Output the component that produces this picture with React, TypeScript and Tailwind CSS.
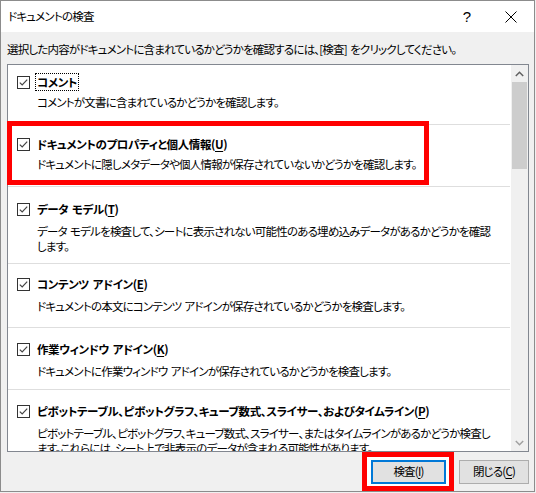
import type { ReactNode } from 'react'

// Office "ドキュメントの検査" dialog, Windows 10 look.

function CheckBox() {
  return (
    <svg width="13" height="13" viewBox="0 0 13 13" className="shrink-0" aria-hidden>
      <rect x="0.5" y="0.5" width="12" height="12" fill="#fff" stroke="#333" />
      <path d="M2.8 6.6 L5.2 9 L10.2 3.6" fill="none" stroke="#444" strokeWidth="1.2" />
    </svg>
  )
}

function Key({ k }: { k: string }) {
  return (
    <>
      (<span className="underline underline-offset-2">{k}</span>)
    </>
  )
}

interface ItemProps {
  title: ReactNode
  desc: ReactNode
  pt: string
  gap: string
  pb: string
  focus?: boolean
  last?: boolean
}

function Item({ title, desc, pt, gap, pb, focus, last }: ItemProps) {
  return (
    <div className={`${pt} ${pb} ${last ? '' : 'border-b border-[#dedede]'} mr-[1px]`}>
      <div className="flex h-[16px] items-center gap-[5px] pl-[9px]">
        <CheckBox />
        <span
          className={`border px-[1px] leading-[16px] font-bold tracking-[-0.4px] whitespace-pre ${
            focus ? 'border-dotted border-black' : 'border-transparent'
          }`}
        >
          {title}
        </span>
      </div>
      <div className={`${gap} pl-[29px] whitespace-pre`}>{desc}</div>
    </div>
  )
}

export default function App() {
  return (
    <div className="h-[493px] w-[536px] bg-[#f0f0f0] text-[11.5px] tracking-[-0.8px] [word-spacing:1.5px] text-black [font-family:'Noto_Sans_CJK_JP','Noto_Sans',sans-serif] [font-feature-settings:'palt']">
      <div className="flex h-[492px] w-[535px] flex-col border border-[#8c8c8c] bg-[#f0f0f0]">
        {/* title bar */}
        <div className="flex h-[31px] shrink-0 items-center bg-white pl-[7px]">
          <span className="leading-none">ドキュメントの検査</span>
          <span className="ml-auto mr-[34px] text-[15px] leading-none tracking-normal [font-family:'Liberation_Sans',sans-serif]">?</span>
          <svg width="12" height="12" viewBox="0 0 12 12" className="mr-[17px]" aria-hidden>
            <path d="M0.5 0.5 L11.5 11.5 M11.5 0.5 L0.5 11.5" stroke="#000" strokeWidth="1" />
          </svg>
        </div>

        {/* instruction */}
        <div className="flex h-[32px] shrink-0 items-center pl-[6px] pt-[3px] whitespace-pre">
          選択した内容がドキュメントに含まれているかどうかを確認するには、[検査] をクリックしてください。
        </div>

        {/* list */}
        <div className="ml-[6px] flex h-[388px] w-[522px] shrink-0 overflow-hidden border border-[#828790] bg-white">
          <div className="flex min-w-0 flex-1 flex-col overflow-hidden">
            <Item
              focus
              pt="pt-[9px]"
              gap="mt-[5px] leading-[15px]"
              pb="pb-[14px]"
              title="コメント"
              desc="コメントが文書に含まれているかどうかを確認します。"
            />
            <Item
              pt="pt-[11px]"
              gap="mt-[5px] leading-[15px]"
              pb="pb-[14px]"
              title={<>ドキュメントのプロパティと個人情報<Key k="U" /></>}
              desc="ドキュメントに隠しメタデータや個人情報が保存されていないかどうかを確認します。"
            />
            <Item
              pt="pt-[14px]"
              gap="mt-[7px] leading-[15px]"
              pb="pb-[9px]"
              title={<>データ モデル<Key k="T" /></>}
              desc={
                <>
                  データ モデルを検査して、シートに表示されない可能性のある埋め込みデータがあるかどうかを確認
                  <br />
                  します。
                </>
              }
            />
            <Item
              pt="pt-[12px]"
              gap="mt-[7px] leading-[15px]"
              pb="pb-[13px]"
              title={<>コンテンツ アドイン<Key k="E" /></>}
              desc="ドキュメントの本文にコンテンツ アドインが保存されているかどうかを検査します。"
            />
            <Item
              pt="pt-[13px]"
              gap="mt-[7px] leading-[15px]"
              pb="pb-[10px]"
              title={<>作業ウィンドウ アドイン<Key k="K" /></>}
              desc="ドキュメントに作業ウィンドウ アドインが保存されているかどうかを検査します。"
            />
            <Item
              last
              pt="pt-[13px]"
              gap="mt-[7px] leading-[15px]"
              pb="pb-[10px]"
              title={<>ピボットテーブル、ピボットグラフ、キューブ数式、スライサー、およびタイムライン<Key k="P" /></>}
              desc={
                <>
                  ピボットテーブル、ピボットグラフ、キューブ数式、スライサー、またはタイムラインがあるかどうか検査し
                  <br />
                  ます。これらには、シート上で非表示のデータが含まれる可能性があります。
                </>
              }
            />
          </div>

          {/* scrollbar */}
          <div className="flex w-[17px] shrink-0 flex-col bg-[#f0f0f0]">
            <div className="flex h-[17px] items-center justify-center">
              <svg width="9" height="6" viewBox="0 0 9 6" aria-hidden>
                <path d="M0.8 5 L4.5 1.3 L8.2 5" fill="none" stroke="#606060" strokeWidth="1.5" />
              </svg>
            </div>
            <div className="mx-[1px] h-[87px] bg-[#cdcdcd]" />
            <div className="flex-1" />
            <div className="flex h-[17px] items-center justify-center">
              <svg width="9" height="6" viewBox="0 0 9 6" aria-hidden>
                <path d="M0.8 1 L4.5 4.7 L8.2 1" fill="none" stroke="#a0a0a0" strokeWidth="1.5" />
              </svg>
            </div>
          </div>
        </div>

        {/* buttons */}
        <div className="flex justify-end pr-[5px]">
          <div className="border-[5px] border-[#ff0000] bg-white pb-[2px] pl-[4px] pr-[3px] pt-[3px]">
            <button
              type="button"
              className="flex h-[24px] w-[75px] items-center justify-center border-2 border-[#0078d7] bg-[#e1e1e1]"
            >
              検査<Key k="I" />
            </button>
          </div>
          <button
            type="button"
            className="ml-[5px] mt-[8px] flex h-[24px] w-[70px] items-center justify-center border border-[#adadad] bg-[#e1e1e1]"
          >
            閉じる<Key k="C" />
          </button>
        </div>
      </div>

      {/* annotation around the properties item */}
      <div className="pointer-events-none absolute left-[7px] top-[121px] h-[64px] w-[422px] border-[5px] border-[#ff0000]" />
    </div>
  )
}
